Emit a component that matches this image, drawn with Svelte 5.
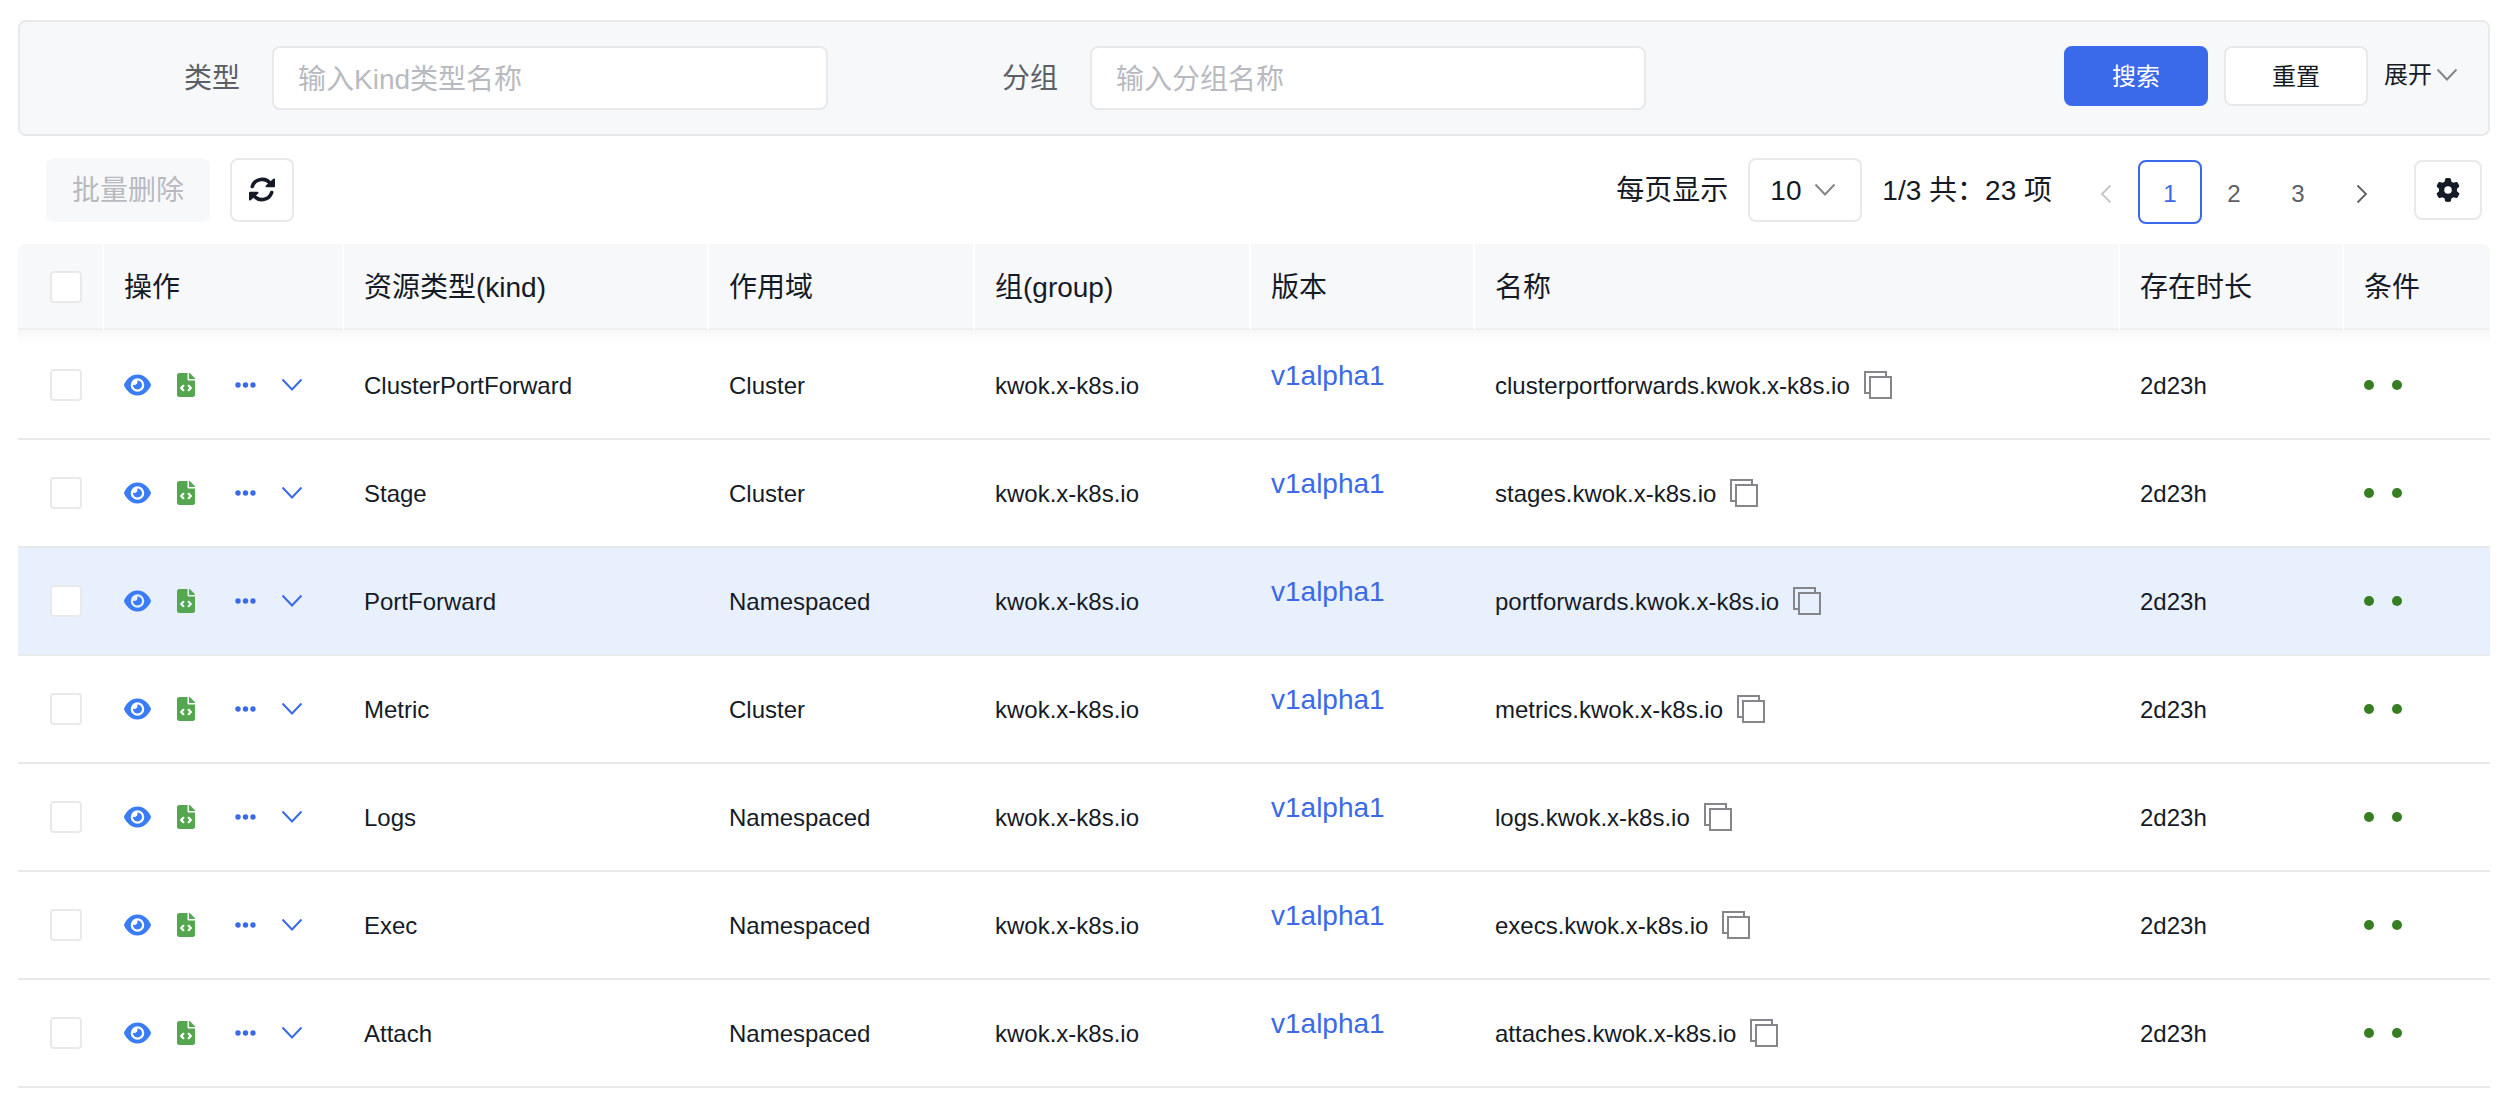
<script>
  const rows = [
    { kind: 'ClusterPortForward', scope: 'Cluster', name: 'clusterportforwards.kwok.x-k8s.io' },
    { kind: 'Stage', scope: 'Cluster', name: 'stages.kwok.x-k8s.io' },
    { kind: 'PortForward', scope: 'Namespaced', name: 'portforwards.kwok.x-k8s.io' },
    { kind: 'Metric', scope: 'Cluster', name: 'metrics.kwok.x-k8s.io' },
    { kind: 'Logs', scope: 'Namespaced', name: 'logs.kwok.x-k8s.io' },
    { kind: 'Exec', scope: 'Namespaced', name: 'execs.kwok.x-k8s.io' },
    { kind: 'Attach', scope: 'Namespaced', name: 'attaches.kwok.x-k8s.io' }
  ];
  const group = 'kwok.x-k8s.io';
  const version = 'v1alpha1';
  const age = '2d23h';
  const pages = [1, 2, 3];

  let kindFilter = $state('');
  let groupFilter = $state('');
  let perPage = $state('10');
  let page = $state(1);
  let active = $state(2);
</script>

{#snippet chevronDown()}
  <svg class="chevron" viewBox="0 0 22 14" aria-hidden="true">
    <path d="M1.5 1.5 11 11.5 20.5 1.5" fill="none" stroke="currentColor" stroke-width="2" />
  </svg>
{/snippet}

<main>
  <form class="filters" onsubmit={(e) => e.preventDefault()}>
    <div class="fields">
      <div class="field">
        <label for="kind">类型</label>
        <input id="kind" type="text" placeholder="输入Kind类型名称" bind:value={kindFilter} />
      </div>
      <div class="field">
        <label for="group">分组</label>
        <input id="group" type="text" placeholder="输入分组名称" bind:value={groupFilter} />
      </div>
    </div>
    <div class="actions">
      <button class="btn primary" type="submit">搜索</button>
      <button class="btn" type="reset">重置</button>
      <button class="expand" type="button"><span>展开</span>{@render chevronDown()}</button>
    </div>
  </form>

  <div class="toolbar">
    <div class="tools">
      <button class="bulk" type="button" disabled>批量删除</button>
      <button class="icon-btn" type="button" aria-label="刷新">
        <svg class="refresh" viewBox="0 0 28 28" aria-hidden="true">
          <g fill="none" stroke="currentColor" stroke-width="3.6" stroke-linecap="round">
            <path d="M4.3 10.5A10.2 10.2 0 0 1 22.5 8" />
            <path d="M23.7 16.5A10.2 10.2 0 0 1 5.5 19" />
          </g>
          <g fill="currentColor" stroke="currentColor" stroke-width="2" stroke-linejoin="round">
            <path d="M26 3.5V10.3H18.5Z" />
            <path d="M2 23.5V16.7H9.5Z" />
          </g>
        </svg>
      </button>
    </div>
    <div class="paging">
      <label for="per-page">每页显示</label>
      <div class="select">
        <select id="per-page" bind:value={perPage}>
          <option>10</option>
          <option>20</option>
          <option>50</option>
        </select>
        <span class="select-arrow">{@render chevronDown()}</span>
      </div>
      <span class="total">1/3 共：23 项</span>
      <nav class="pager" aria-label="分页">
        <button type="button" class="prev" disabled={page === 1} aria-label="上一页" onclick={() => page--}>
          <svg viewBox="0 0 12 20" aria-hidden="true"><path d="M10.5 1.5 2 10l8.5 8.5" fill="none" stroke="currentColor" stroke-width="1.8" /></svg>
        </button>
        {#each pages as p}
          <button type="button" class:current={p === page} onclick={() => (page = p)}>{p}</button>
        {/each}
        <button type="button" disabled={page === 3} aria-label="下一页" onclick={() => page++}>
          <svg viewBox="0 0 12 20" aria-hidden="true"><path d="M1.5 1.5 10 10l-8.5 8.5" fill="none" stroke="currentColor" stroke-width="1.8" /></svg>
        </button>
      </nav>
      <button class="icon-btn settings" type="button" aria-label="设置">
        <svg class="gear" viewBox="0 0 512 512" aria-hidden="true">
          <path fill="currentColor" d="M495.9 166.6c3.2 8.7 .5 18.4-6.4 24.6l-43.3 39.4c1.1 8.3 1.7 16.8 1.7 25.4s-.6 17.1-1.7 25.4l43.3 39.4c6.9 6.2 9.6 15.9 6.4 24.6c-4.4 11.9-9.7 23.3-15.8 34.3l-4.7 8.1c-6.6 11-14 21.4-22.1 31.2c-5.9 7.2-15.7 9.6-24.5 6.8l-55.7-17.7c-13.4 10.3-28.2 18.9-44 25.4l-12.5 57.1c-2 9.1-9 16.3-18.2 17.8c-13.8 2.3-28 3.5-42.5 3.5s-28.7-1.2-42.5-3.5c-9.2-1.5-16.2-8.7-18.2-17.8l-12.5-57.1c-15.8-6.5-30.6-15.1-44-25.4L83.1 425.9c-8.8 2.8-18.6 .3-24.5-6.8c-8.1-9.8-15.5-20.2-22.1-31.2l-4.7-8.1c-6.1-11-11.4-22.4-15.8-34.3c-3.2-8.7-.5-18.4 6.4-24.6l43.3-39.4C64.6 273.1 64 264.6 64 256s.6-17.1 1.7-25.4L22.4 191.2c-6.9-6.2-9.6-15.9-6.4-24.6c4.4-11.9 9.7-23.3 15.8-34.3l4.7-8.1c6.6-11 14-21.4 22.1-31.2c5.9-7.2 15.7-9.6 24.5-6.8l55.7 17.7c13.4-10.3 28.2-18.9 44-25.4l12.5-57.1c2-9.1 9-16.3 18.2-17.8C227.3 1.2 241.5 0 256 0s28.7 1.2 42.5 3.5c9.2 1.5 16.2 8.7 18.2 17.8l12.5 57.1c15.8 6.5 30.6 15.1 44 25.4l55.7-17.7c8.8-2.8 18.6-.3 24.5 6.8c8.1 9.8 15.5 20.2 22.1 31.2l4.7 8.1c6.1 11 11.4 22.4 15.8 34.3zM256 336a80 80 0 1 0 0-160 80 80 0 1 0 0 160z" />
        </svg>
      </button>
    </div>
  </div>

  <table>
    <colgroup>
      <col class="c-check" /><col class="c-ops" /><col class="c-kind" /><col class="c-scope" />
      <col class="c-group" /><col class="c-version" /><col /><col class="c-age" /><col class="c-cond" />
    </colgroup>
    <thead>
      <tr>
        <th class="check"><input type="checkbox" aria-label="全选" /></th>
        <th>操作</th>
        <th>资源类型(kind)</th>
        <th>作用域</th>
        <th>组(group)</th>
        <th>版本</th>
        <th>名称</th>
        <th>存在时长</th>
        <th>条件</th>
      </tr>
    </thead>
    <tbody>
      {#each rows as row, i}
        <tr class:active={i === active} onmouseenter={() => (active = i)}>
          <td class="check"><input type="checkbox" aria-label={row.kind} /></td>
          <td>
            <div class="ops">
              <button type="button" class="eye" aria-label="查看">
                <svg viewBox="0 0 576 512" aria-hidden="true">
                  <path fill="currentColor" fill-rule="evenodd" d="M288 32c-80.8 0-145.5 36.8-192.6 80.6C48.6 156 17.3 208 2.5 243.7c-3.3 7.9-3.3 16.7 0 24.6C17.3 304 48.6 356 95.4 399.4C142.5 443.2 207.2 480 288 480s145.5-36.8 192.6-80.6c46.8-43.5 78.1-95.4 93-131.1c3.3-7.9 3.3-16.7 0-24.6c-14.9-35.7-46.2-87.7-93-131.1C433.5 68.8 368.8 32 288 32zM144 256a144 144 0 1 1 288 0 144 144 0 1 1 -288 0zm144-64c0 35.3-28.7 64-64 64c-7.1 0-13.9-1.2-20.3-3.3c-5.5-1.8-11.9 1.6-11.7 7.4c.3 6.9 1.3 13.8 3.2 20.7c13.7 51.2 66.4 81.6 117.6 67.9s81.6-66.4 67.9-117.6c-11.1-41.5-47.8-69.4-88.6-71.1c-5.8-.2-9.2 6.1-7.4 11.7c2.1 6.4 3.3 13.2 3.3 20.3z" />
                </svg>
              </button>
              <button type="button" class="code" aria-label="YAML">
                <svg viewBox="0 0 384 512" aria-hidden="true">
                  <path fill="currentColor" fill-rule="evenodd" d="M48 0C21.5 0 0 21.5 0 48V464c0 26.5 21.5 48 48 48H336c26.5 0 48-21.5 48-48V160H248c-13.2 0-24-10.8-24-24V0H48zM256 0V128H384v-6c0-6-2.5-12.5-7-17L279 7c-4.5-4.5-11-7-17-7zM153 289l-31 31 31 31c9.4 9.4 9.4 24.6 0 33.9s-24.6 9.4-33.9 0L71 337c-9.4-9.4-9.4-24.6 0-33.9l48-48c9.4-9.4 24.6-9.4 33.9 0s9.4 24.6 0 33.9zM265 255l48 48c9.4 9.4 9.4 24.6 0 33.9l-48 48c-9.4 9.4-24.6 9.4-33.9 0s-9.4-24.6 0-33.9l31-31-31-31c-9.4-9.4-9.4-24.6 0-33.9s24.6-9.4 33.9 0z" />
                </svg>
              </button>
              <button type="button" class="more" aria-label="更多">
                <svg class="dots" viewBox="0 0 21 6" aria-hidden="true">
                  <circle cx="3" cy="3" r="2.7" fill="currentColor" /><circle cx="10.5" cy="3" r="2.7" fill="currentColor" /><circle cx="18" cy="3" r="2.7" fill="currentColor" />
                </svg>
                {@render chevronDown()}
              </button>
            </div>
          </td>
          <td><div class="text">{row.kind}</div></td>
          <td><div class="text">{row.scope}</div></td>
          <td><div class="text">{group}</div></td>
          <td><a class="version" href="#{row.kind}">{version}</a></td>
          <td>
            <div class="name">
              <span class="text">{row.name}</span>
              <button type="button" aria-label="复制">
                <svg viewBox="0 0 28 28" aria-hidden="true">
                  <path d="M5 22H1V1h21v4M6 6h21v21H6z" fill="none" stroke="currentColor" stroke-width="2" />
                </svg>
              </button>
            </div>
          </td>
          <td><div class="text">{age}</div></td>
          <td><div class="conds"><i></i><i></i></div></td>
        </tr>
      {/each}
    </tbody>
  </table>
</main>

<style>
  :global(body) {
    background: #fff;
  }
  main {
    padding: 20px 16px 20px 18px;
    color: #151b26;
    font: 24px/36px 'Liberation Sans', 'Noto Sans CJK SC', sans-serif;
  }
  main,
  main * {
    box-sizing: border-box;
  }
  button,
  input,
  select {
    margin: 0;
    padding: 0;
    font: inherit;
    color: inherit;
    background: none;
    border: 0;
  }
  button {
    cursor: pointer;
  }
  svg {
    display: block;
  }

  .filters {
    display: grid;
    grid-template-columns: 1626fr 842fr;
    padding: 24px 0;
    background: #f7f8fa;
    border: 2px solid #e8e9eb;
    border-radius: 8px;
  }
  .fields {
    display: grid;
    grid-template-columns: 1fr 1fr;
    gap: 10px;
  }
  .field {
    display: flex;
    align-items: center;
    gap: 32px;
    font-size: 28px;
    color: #5c5f66;
  }
  .field label {
    flex: 0 0 220px;
    padding-top: 2px;
    text-align: right;
  }
  .field input {
    flex: 1;
    min-width: 0;
    height: 64px;
    padding: 4px 24px 0;
    color: #151b26;
    background: #fff;
    border: 2px solid #e8e9eb;
    border-radius: 8px;
  }
  .field input::placeholder {
    color: #b8babf;
    opacity: 1;
  }
  .actions {
    display: flex;
    justify-content: flex-end;
    align-items: flex-start;
    gap: 16px;
    padding-right: 30px;
  }
  .btn {
    width: 144px;
    height: 60px;
    padding-top: 2px;
    background: #fff;
    border: 2px solid #e8e9eb;
    border-radius: 8px;
  }
  .btn.primary {
    color: #fff;
    background: #3a69e9;
    border-color: #3a69e9;
  }
  .expand {
    display: flex;
    align-items: center;
    gap: 4px;
    height: 58px;
  }
  .chevron {
    width: 22px;
    height: 14px;
  }
  .expand .chevron,
  .select-arrow {
    color: #84868c;
  }

  .toolbar {
    display: flex;
    justify-content: space-between;
    align-items: center;
    padding: 20px 8px 20px 28px;
    font-size: 28px;
  }
  .tools,
  .paging {
    display: flex;
    align-items: center;
    gap: 20px;
  }
  .paging label,
  .total {
    padding-top: 2px;
  }
  .total {
    padding-right: 2px;
  }
  .bulk {
    height: 64px;
    padding: 2px 26px 0;
    color: #b8babf;
    background: #f7f8fa;
    border-radius: 8px;
  }
  .icon-btn {
    display: grid;
    place-items: center;
    width: 64px;
    height: 64px;
    background: #fff;
    border: 2px solid #e8e9eb;
    border-radius: 8px;
  }
  .settings {
    width: 68px;
    height: 60px;
  }
  .refresh {
    width: 28px;
    height: 28px;
  }
  .gear {
    width: 24px;
    height: 24px;
  }
  .select {
    display: grid;
    align-items: center;
  }
  .select select {
    grid-area: 1 / 1;
    width: 114px;
    height: 64px;
    padding: 2px 46px 0 20px;
    appearance: none;
    background: #fff;
    border: 2px solid #e8e9eb;
    border-radius: 8px;
  }
  .select-arrow {
    grid-area: 1 / 1;
    justify-self: end;
    padding-right: 26px;
    pointer-events: none;
  }
  .pager {
    display: flex;
    padding-top: 4px;
    font-size: 24px;
    color: #5c5f66;
  }
  .pager button {
    display: grid;
    place-items: center;
    width: 64px;
    height: 64px;
    padding-top: 4px;
    border: 2px solid transparent;
    border-radius: 8px;
  }
  .pager .current {
    color: #3a69e9;
    border-color: #3a69e9;
  }
  .pager .prev {
    color: #c4c6cc;
  }
  .pager svg {
    width: 12px;
    height: 20px;
  }

  table {
    width: 100%;
    table-layout: fixed;
    border-collapse: separate;
    border-spacing: 0;
  }
  .c-check { width: 86px; }
  .c-ops { width: 240px; }
  .c-kind { width: 365px; }
  .c-scope { width: 266px; }
  .c-group { width: 276px; }
  .c-version { width: 224px; }
  .c-age { width: 224px; }
  .c-cond { width: 146px; }
  th,
  td {
    padding: 0 20px;
    text-align: left;
    vertical-align: middle;
    border-bottom: 2px solid #e8e9eb;
  }
  th {
    height: 86px;
    padding-top: 4px;
    font-size: 28px;
    font-weight: 400;
    background: #f7f8fa;
    border-right: 2px solid #fff;
    border-bottom-color: #eeeff1;
  }
  th:first-child {
    border-top-left-radius: 8px;
  }
  th:last-child {
    border-right: 0;
    border-top-right-radius: 8px;
  }
  td {
    height: 108px;
  }
  tbody tr:first-child td {
    height: 110px;
    padding-top: 2px;
    background: linear-gradient(#f7f7f7, #fff 16px);
  }
  tbody tr.active td {
    background: #e8effd;
  }
  .check {
    padding: 0 0 0 32px;
  }
  th.check {
    padding-top: 2px;
  }
  .check input {
    display: block;
    width: 32px;
    height: 32px;
    appearance: none;
    background: #fff;
    border: 2px solid #e8e9eb;
    border-radius: 4px;
  }
  .check input:checked {
    background: #3a69e9;
  }
  .text {
    padding-top: 2px;
  }

  .ops {
    display: flex;
    align-items: center;
  }
  .eye {
    color: #3a7bf7;
  }
  .eye svg {
    width: 27px;
    height: 24px;
  }
  .code {
    margin-left: 26px;
    color: #54a651;
  }
  .code svg {
    width: 18px;
    height: 24px;
  }
  .more {
    display: flex;
    align-items: center;
    gap: 25px;
    margin-left: 40px;
    color: #3a69e9;
  }
  .dots {
    width: 21px;
    height: 6px;
  }
  .version {
    display: block;
    padding-bottom: 18px;
    font-size: 28px;
    color: #3a69e9;
    text-decoration: none;
  }
  .name {
    display: flex;
    align-items: center;
    gap: 14px;
  }
  .name button {
    color: #84868c;
  }
  .name svg {
    width: 28px;
    height: 28px;
  }
  .conds {
    display: flex;
    gap: 18px;
  }
  .conds i {
    width: 10px;
    height: 10px;
    border-radius: 50%;
    background: #377d22;
  }
</style>
